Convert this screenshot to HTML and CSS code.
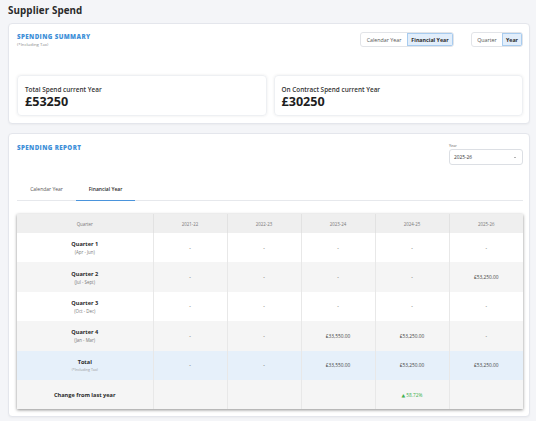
FILE: index.html
```html
<!DOCTYPE html>
<html>
<head>
<meta charset="utf-8">
<link rel="stylesheet" href="styles.css">
</head>
<body>
<h1 class="page-title">Supplier Spend</h1>

<section class="card summary">
  <div class="card-head">
    <div>
      <div class="section-title">SPENDING SUMMARY</div>
      <div class="sub">(*Including Tax)</div>
    </div>
    <div class="toggles">
      <div class="seg">
        <span class="seg-btn">Calendar Year</span>
        <span class="seg-btn active">Financial Year</span>
      </div>
      <div class="seg">
        <span class="seg-btn">Quarter</span>
        <span class="seg-btn active">Year</span>
      </div>
    </div>
  </div>
  <div class="stats">
    <div class="stat">
      <div class="stat-label">Total Spend current Year</div>
      <div class="stat-value">£53250</div>
    </div>
    <div class="stat">
      <div class="stat-label">On Contract Spend current Year</div>
      <div class="stat-value">£30250</div>
    </div>
  </div>
</section>

<section class="card report">
  <div class="report-head">
    <div class="section-title">SPENDING REPORT</div>
    <div class="year-field">
      <div class="field-label">Year</div>
      <div class="select"><span>2025-26</span><span class="caret"></span></div>
    </div>
  </div>
  <div class="tabs">
    <span class="tab">Calendar Year</span>
    <span class="tab active">Financial Year</span>
  </div>
  <table class="grid">
    <thead>
      <tr><th>Quarter</th><th>2021-22</th><th>2022-23</th><th>2023-24</th><th>2024-25</th><th>2025-26</th></tr>
    </thead>
    <tbody>
      <tr><td class="q"><b>Quarter 1</b><span>(Apr - Jun)</span></td><td>-</td><td>-</td><td>-</td><td>-</td><td>-</td></tr>
      <tr class="alt"><td class="q"><b>Quarter 2</b><span>(Jul - Sept)</span></td><td>-</td><td>-</td><td>-</td><td>-</td><td>£53,250.00</td></tr>
      <tr><td class="q"><b>Quarter 3</b><span>(Oct - Dec)</span></td><td>-</td><td>-</td><td>-</td><td>-</td><td>-</td></tr>
      <tr class="alt"><td class="q"><b>Quarter 4</b><span>(Jan - Mar)</span></td><td>-</td><td>-</td><td>£33,550.00</td><td>£53,250.00</td><td>-</td></tr>
      <tr class="total"><td class="q"><b>Total</b><span class="tiny">(*Including Tax)</span></td><td>-</td><td>-</td><td>£33,550.00</td><td>£53,250.00</td><td>£53,250.00</td></tr>
      <tr class="alt"><td class="q"><b>Change from last year</b></td><td></td><td></td><td></td><td class="up">▲ 58.72%</td><td></td></tr>
    </tbody>
  </table>
</section>
</body>
</html>
```

FILE: styles.css
```css
* { box-sizing: border-box; }
html, body { margin: 0; }
body {
  background: #f4f5f8;
  font-family: "Open Sans", "DejaVu Sans", sans-serif;
  color: #2b2b2b;
  padding: 0 6px 0 8px;
  width: 536px;
  height: 421px;
  overflow: hidden;
}
.page-title {
  margin: 0;
  height: 23px;
  padding-top: 4px;
  font-size: 9.8px;
  font-weight: 700;
  color: #2a2a2a;
  letter-spacing: 0.1px;
}
.card {
  background: #fff;
  border: 1px solid #e4e6ec;
  border-radius: 4px;
  box-shadow: 0 1px 2px rgba(0,0,0,0.04);
}
.summary {
  height: 101px;
  padding: 8px 6px 7px 8px;
  display: flex;
  flex-direction: column;
  justify-content: space-between;
}
.card-head {
  display: flex;
  justify-content: space-between;
  align-items: flex-start;
}
.section-title {
  color: #3d8fd8;
  font-size: 6.2px;
  font-weight: 800;
  letter-spacing: 0.4px;
  margin-top: 0;
}
.sub {
  font-size: 4.3px;
  color: #8a8a8a;
  margin-top: 0;
}
.toggles { display: flex; gap: 17px; }
.seg {
  display: flex;
  border: 1px solid #e2e4e8;
  border-radius: 3px;
  overflow: hidden;
  height: 15px;
}
.seg-btn {
  font-size: 5.3px;
  color: #555;
  padding: 0 5px;
  display: flex;
  align-items: center;
  justify-content: center;
}
.seg:first-child .seg-btn { width: 46px; padding: 0; }
.seg:last-child .seg-btn:first-child { width: 30px; padding: 0; }
.seg:last-child .seg-btn:last-child { width: 20px; padding: 0; }
.seg-btn.active {
  background: #e2eefb;
  color: #2a2a2a;
  font-weight: 700;
  box-shadow: inset 0 0 0 1px #a8ccef;
}
.stats {
  display: flex;
  gap: 7px;
}
.stat {
  flex: 1;
  height: 41px;
  border-radius: 4px;
  box-shadow: 0 0 3px rgba(0,0,0,0.08);
  border: 1px solid #eef0f3;
  padding: 9px 7px;
}
.stat-label {
  font-size: 6.4px;
  font-weight: 600;
  color: #333;
}
.stat-value {
  font-size: 12.6px;
  font-weight: 700;
  color: #1e1e1e;
  line-height: 15px;
  margin-top: 0;
}
.report {
  margin-top: 9px;
  height: 284px;
  padding: 8px 6px 8px 8px;
}
.report-head {
  display: flex;
  justify-content: space-between;
  align-items: flex-start;
  height: 40px;
}
.report-head .section-title { margin-top: 1px; }
.year-field { width: 74px; margin-top: 1px; }
.field-label { font-size: 3.8px; color: #666; height: 6px; }
.select {
  height: 16px;
  border: 1px solid #dcdfe4;
  border-radius: 3px;
  font-size: 4.8px;
  color: #333;
  display: flex;
  align-items: center;
  justify-content: space-between;
  padding: 0 6px 0 4px;
}
.caret {
  width: 0; height: 0;
  border-left: 1.6px solid transparent;
  border-right: 1.6px solid transparent;
  border-top: 1.8px solid #666;
}
.tabs {
  display: flex;
  border-bottom: 1px solid #e6e8ec;
  height: 19px;
}
.tab {
  font-size: 5px;
  color: #555;
  width: 59px;
  text-align: center;
  padding-top: 4px;
}
.tab.active {
  color: #2a2a2a;
  font-weight: 600;
  border-bottom: 1px solid #4a94dc;
  margin-bottom: -1px;
}
.grid {
  margin-top: 13px;
  width: 100%;
  border-collapse: collapse;
  box-shadow: 0 1px 3px rgba(0,0,0,0.45);
  table-layout: fixed;
  font-size: 4.8px;
  color: #444;
}
.grid th:first-child { width: 136px; }
.grid th {
  background: #efefef;
  font-weight: 400;
  color: #777;
  height: 19px;
  border-right: 1px solid #e2e2e2;
  font-size: 4.4px;
}
.grid td {
  height: 29.4px;
  text-align: center;
  border-right: 1px solid #e8e8e8;
  vertical-align: middle;
}
.grid th:last-child, .grid td:last-child { border-right: 0; }
.grid tr { background: #fff; }
.grid tr.alt { background: #f5f5f5; }
.grid tr.total { background: #e6f0fa; }
.grid td.q b {
  display: block;
  font-size: 5.6px;
  font-weight: 700;
  color: #2a2a2a;
}
.grid td.q span {
  display: block;
  font-size: 4.4px;
  color: #777;
  margin-top: 1px;
}
.grid td.q span.tiny { font-size: 3.6px; color: #999; }
.grid td.up { color: #3fb04f; }
```
